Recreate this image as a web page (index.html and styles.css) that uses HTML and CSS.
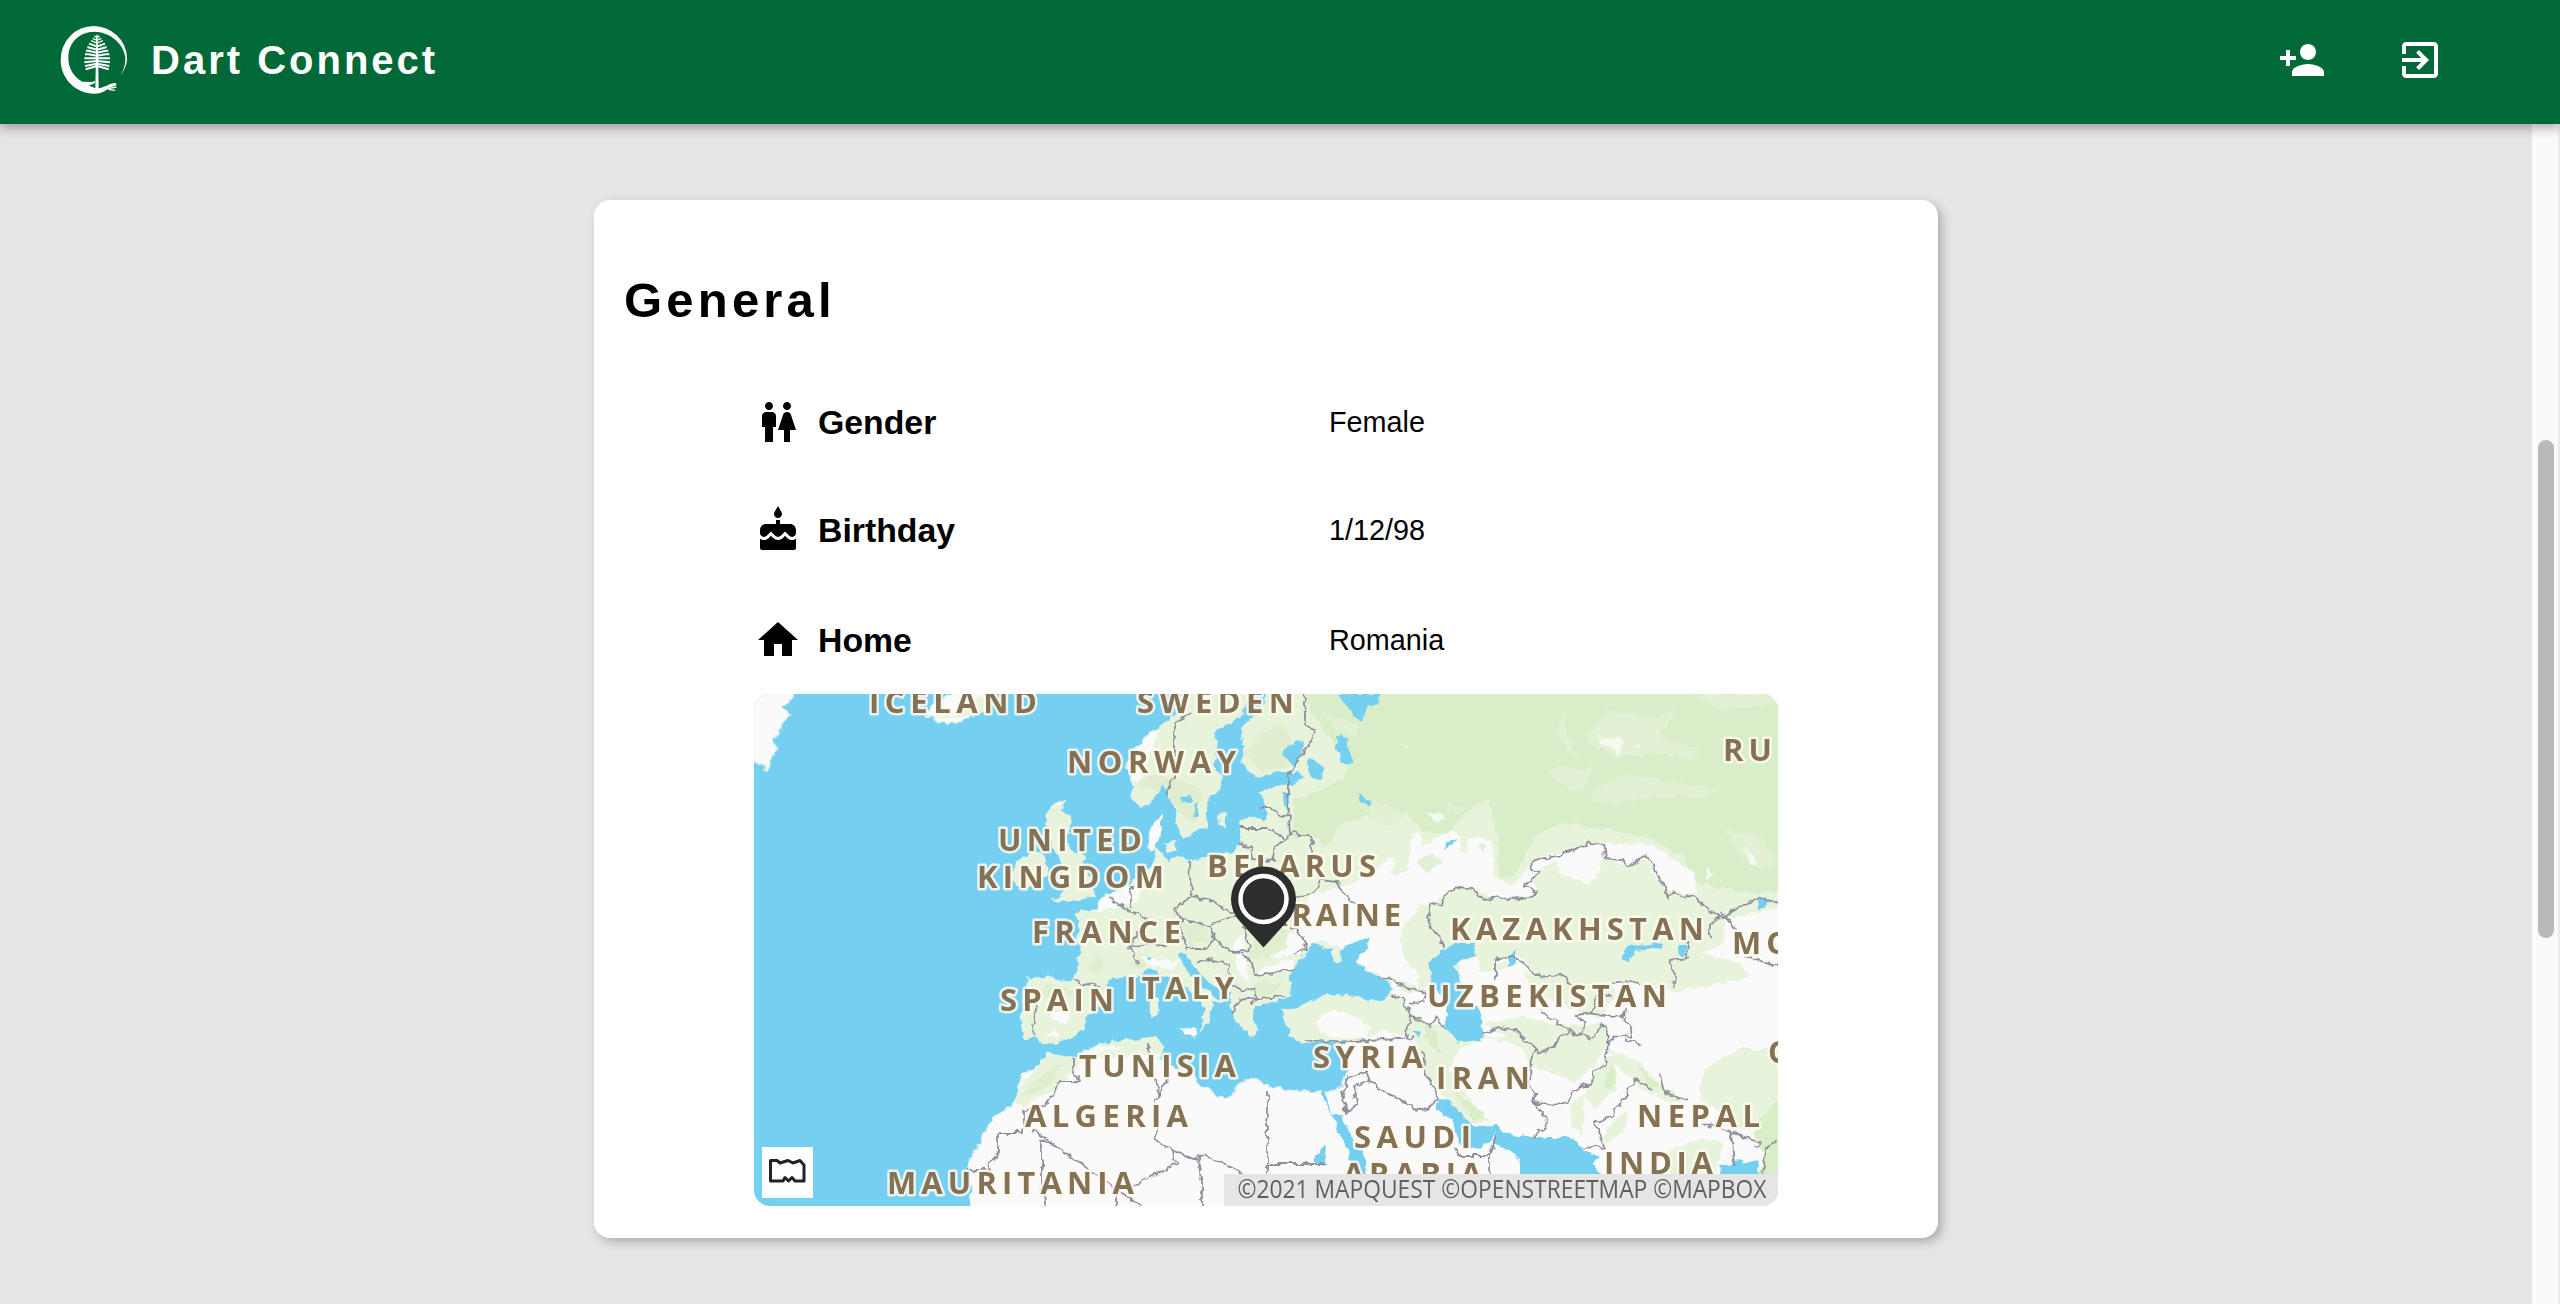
FILE: index.html
```html
<!DOCTYPE html>
<html lang="en">
<head>
<meta charset="utf-8">
<title>Dart Connect</title>
<link rel="stylesheet" href="styles.css">
</head>
<body>
<header class="topbar">
  <div class="brand">
    <svg class="logo" viewBox="0 0 240 240" aria-hidden="true">
      <path fill="#fff" d="M195 169C211 146 217 130 216 112A101 98 0 0 0 116 18A99 101 0 0 0 17 120C17 176 62 221 118 221C142 221 152 212 162 204L185 195L182 189C162 190 150 202 132 205L122 205L102 197L120 189L120 182L112 186L82 185C56 170 40 146 40 113C40 66 74 36 117 35C166 35 206 72 211 112C212 134 206 150 195 169Z"/>
      <path fill="none" stroke="#fff" stroke-width="4" d="M160 206L184 201M160 208L180 211"/>
      <path fill="#fff" d="M124 44H128L131 206H121Z"/>
      <g fill="none" stroke="#fff" stroke-width="6">
        <path stroke-width="4" d="M118 48L126 53L134 48M113 55L126 61L139 55M108 62L126 69L144 62"/>
        <path d="M102 71L126 79L150 71M97 81L126 89L155 81M93 92H100L126 98L152 92H160M90 103H100L126 107L152 103H163M88 115L126 115L165 115M88 127L126 123L165 127M90 138L126 131L163 138M92 148L126 138L161 148"/>
      </g>
    </svg>
    <span class="brand-name">Dart Connect</span>
  </div>
  <nav class="actions">
    <svg class="icon" viewBox="0 0 24 24"><path d="M15 12c2.21 0 4-1.79 4-4s-1.79-4-4-4-4 1.79-4 4 1.79 4 4 4zm-9-2V7H4v3H1v2h3v3h2v-3h3v-2H6zm9 4c-2.67 0-8 1.34-8 4v2h16v-2c0-2.66-5.33-4-8-4z"/></svg>
    <svg class="icon" viewBox="0 0 24 24"><path d="M10.09 15.59L11.5 17l5-5-5-5-1.41 1.41L12.67 11H3v2h9.67l-2.58 2.59zM19 3H5c-1.11 0-2 .9-2 2v4h2V5h14v14H5v-4H3v4c0 1.1.89 2 2 2h14c1.1 0 2-.9 2-2V5c0-1.1-.9-2-2-2z"/></svg>
  </nav>
</header>
<div class="body">
  <main class="content">
    <section class="card">
      <h1 class="card-title">General</h1>
      <div class="details">
        <div class="row">
          <div class="field"><svg class="icon" viewBox="0 0 24 24"><path d="M5.5 22v-7.5H4V9c0-1.1.9-2 2-2h3c1.1 0 2 .9 2 2v5.5H9.5V22h-4zM18 22v-6h3l-2.54-7.63C18.18 7.55 17.42 7 16.56 7h-.12c-.86 0-1.63.55-1.9 1.37L12 16h3v6h3zM7.5 6c1.11 0 2-.89 2-2s-.89-2-2-2-2 .89-2 2 .89 2 2 2zm9 0c1.11 0 2-.89 2-2s-.89-2-2-2-2 .89-2 2 .89 2 2 2z"/></svg><span>Gender</span></div>
          <div class="value">Female</div>
        </div>
        <div class="row row-birthday">
          <div class="field"><svg class="icon" viewBox="0 0 24 24"><path d="M12 6c1.11 0 2-.9 2-2 0-.38-.1-.73-.29-1.03L12 0l-1.71 2.97c-.19.3-.29.65-.29 1.03 0 1.1.9 2 2 2zm4.6 9.99l-1.07-1.07-1.08 1.07c-1.3 1.3-3.58 1.31-4.89 0l-1.07-1.07-1.09 1.07C6.75 16.64 5.88 17 4.96 17c-.73 0-1.4-.23-1.96-.61V21c0 .55.45 1 1 1h16c.55 0 1-.45 1-1v-4.61c-.56.38-1.23.61-1.96.61-.92 0-1.79-.36-2.44-1.01zM18 9h-5V7h-2v2H6c-1.66 0-3 1.34-3 3v1.54c0 1.08.88 1.96 1.96 1.96.52 0 1.02-.2 1.38-.57l2.14-2.13 2.13 2.13c.74.74 2.03.74 2.77 0l2.14-2.13 2.13 2.13c.37.37.86.57 1.38.57 1.08 0 1.96-.88 1.96-1.96V12C21 10.34 19.66 9 18 9z"/></svg><span>Birthday</span></div>
          <div class="value">1/12/98</div>
        </div>
        <div class="row row-home">
          <div class="field"><svg class="icon" viewBox="0 0 24 24"><path d="M10 20v-6h4v6h5v-8h3L12 3 2 12h3v8z"/></svg><span>Home</span></div>
          <div class="value">Romania</div>
        </div>
        <svg class="map" viewBox="0 0 1024 512" role="img" aria-label="Map of Romania">
          <defs>
            <filter id="rough" filterUnits="userSpaceOnUse" x="-20" y="-20" width="1064" height="552">
              <feTurbulence type="fractalNoise" baseFrequency=".12" numOctaves="2" seed="4" result="n"/>
              <feDisplacementMap in="SourceGraphic" in2="n" scale="8" xChannelSelector="R" yChannelSelector="G"/>
              <feGaussianBlur stdDeviation=".6"/>
            </filter>
            <clipPath id="mainland">
              <path id="land" d="M-10-10H43L38 6 29 13 36 21 28 29 26 39 19 46 23 56 16 66 14 76 0 68H-10Z
                M172 22L180 10 205-5 240 0 236 14 214 24 206 30 192 30Z
                M294 122L300 110 310 107 306 117 317 123 315 134 311 144 316 157 330 163 328 172 338 190 340 202 320 206 300 206 313 195 306 186 312 176 306 166 298 150 292 140Z
                M263 168L280 158 291 162 292 182 270 196 258 186Z
                M429-10L426 21 414 26 401 36 389 46 378 59 373 73 381 93 376 103 388 113 401 103 409 89 416 103 421 116 423 129 429 144 439 139 451 134 453 106 466 93 468 84 460 76 463 49 459 39 473 29 489 19 498-10Z
                M514-10L511 10 503 19 489 33 491 53 489 71 506 83 526 76 545 78 552 84 543 90 526 92 506 98 513 113 513 126 503 126 494 121 488 131 489 139 486 149 479 159 456 163 436 168 429 163 413 168 406 159 394 153 396 136 408 121 406 139 402 150 401 173 384 183 373 193 346 204 343 216 321 219 326 229 323 243 329 259 324 263 324 279 318 289 296 284 274 284 269 299 271 313 266 326 271 343 283 344 293 351 316 344 329 334 331 323 346 312 353 306 352 290 359 283 383 283 396 273 409 281 429 289 443 303 453 313 449 324 446 336 453 329 456 318 458 306 469 309 443 289 426 269 423 259 433 259 444 276 456 289 479 299 478 313 481 326 489 333 498 343 503 336 498 326 499 313 523 306 536 301 536 293 534 283 543 269 548 263 556 249 566 248 568 256 579 254 578 266 584 269 589 264 584 256 596 249 616 243 613 256 603 266 613 276 633 286 638 296 629 308 613 306 593 301 573 301 556 309 543 314 526 316 533 329 536 343 551 349 566 346 583 348 588 363 593 376 588 393 569 398 546 398 516 393 496 384 481 393 479 403 469 403 446 393 439 379 416 373 406 366 409 353 403 344 366 348 356 348 336 354 323 364 293 359 286 371 268 381 263 399 259 413 239 423 226 449 214 469 218 489 214 530H1050V-10Z
                M396 306L403 304 404 320 397 322ZM425 335L442 335 441 344ZM410 150L420 148 422 156 414 158ZM466 120L470 120 470 132 466 130Z"/>
            </clipPath>
          </defs>
          <rect width="1024" height="512" fill="#75cff0"/>
          <g filter="url(#rough)">
            <use href="#land" fill="#fafafa" stroke="#dff1ee" stroke-width="1.5"/>
            <g clip-path="url(#mainland)">
              <!-- low vegetation -->
              <path fill="#e8f3dc" d="M172 22H200L236-5 240 20 190 24ZM250 130L340 100 392 70 410 20 430-10H1034V212L969 226 973 249 946 259 986 269 996 283 919 299 873 286 816 286 786 283 766 263 739 266 739 279 706 276 659 300 630 286 606 266 540 308 500 352H260Z"/>
              <path fill="#e8f3dc" d="M286 371L293 359 323 364 420 340 412 360 330 366 306 392 270 412 255 405Z"/>
              <path fill="#e8f3dc" d="M520 310L580 298 640 300 672 330 700 330 740 345 760 340 800 330 830 330 840 345 800 350 782 360 760 350 730 345 705 355 696 375 720 410 735 428 715 428 694 408 670 375 660 345 630 335 600 350H530Z"/>
              <path fill="#e8f3dc" d="M770 355L800 345 815 335 850 330 853 350 838 375 820 388 795 378 775 372ZM830 400L845 370 860 360 862 395 840 415ZM818 410L830 400 828 440 816 432ZM846 450L860 425 875 415 870 435 856 448ZM910 460L940 445 970 448 962 480 915 480ZM945 400L950 375 985 355 1030 355V430L990 436 946 404Z"/>
              <path fill="#e8f3dc" d="M855 355L885 368 900 385 930 408 915 408 890 396 862 372ZM730 330L770 322 820 340 800 350 770 350ZM770 280H850L862 300 846 325 820 315 780 300ZM740 268H765L745 276Z"/>
              <path fill="#d9edc9" d="M1030 400L1005 425 1000 440 1010 460 1000 512H1030ZM700 398L722 412 734 426 718 424ZM850 395L858 370 862 390ZM668 325L682 340 686 360 676 352ZM885 372L910 398 898 394Z"/>
              <!-- forest -->
              <g transform="translate(506 -4) scale(.33333)">
                <path fill="#d9edc9" d="M130 0H1570V600L1470 610 1310 580 1270 500 1180 450 1060 420 900 400 820 440 760 560 720 560 710 440 690 330 640 350 560 430 480 420 440 370 350 370 240 400 200 470 160 440 100 440 100 330 250 270 270 220 200 130 150 60Z"/>
                <path fill="#e2f0d3" d="M870 250L900 220 960 240 1000 230 970 300 930 300ZM980 130L1040 60 1180 80 1250 60 1200 140 1320 180 1300 210 1180 190 1080 200 1000 170ZM900 90L920 60 915 120 960 210 935 200 890 130ZM1000 300L1100 250 1200 270 1380 300 1330 320 1200 320 1060 340 990 340ZM180 60L240 80 290 110 290 140 230 120ZM420 155L450 165 440 175ZM560 340L620 350 600 375 560 370ZM1290 12L1560 12 1560 40 1380 60ZM1400 420L1500 440 1560 520 1500 540 1440 500ZM330 330L440 370 400 410 330 390Z"/>
                <path fill="#f5f9f0" d="M1010 130L1040 150 1080 140 1095 160 1075 195 1055 170 1030 175ZM1120 165L1145 165 1130 180ZM500 375L550 370 555 390 530 395ZM1455 470L1500 520 1480 530 1455 500ZM1340 530L1360 550 1345 570Z"/>
                <path fill="#fafafa" d="M60 760L130 690 150 610 230 600 350 540 380 510 405 505 390 560 450 545 450 440 480 430 490 470 540 440 570 415 600 440 600 490 625 490 625 440 690 450 700 480 700 560 760 590 820 510 980 460 1180 465 1240 510 1300 540 1310 610 1220 605 1150 500 1100 530 1030 500 1010 560 980 580 900 550 890 510 820 550 830 610 780 630 690 620 590 590 520 640 480 650 430 710 420 780 480 860 470 890 300 830 250 780 180 750 110 780 60 810 20 800Z"/>
                <path fill="#e2f0d3" d="M470 510L520 490 545 520 500 550ZM650 465L680 465 670 495Z"/>
              </g>
              <path fill="#dcedcb" opacity=".8" d="M500 245L530 230 536 250 520 262 496 266ZM428 232L450 228 456 246 436 252ZM380 90L400 80 440 90 450 100 440 130 426 120 415 100ZM266 400L290 380 310 368 300 385 280 400ZM370 270L390 262 400 268 385 275ZM340 262L352 268 345 280 334 276ZM500 290L530 288 520 300 502 302ZM490 60L506 40 530 30 545 70 510 78ZM276 296L300 290 330 300 300 304Z"/>
              <path fill="#fafafa" d="M378 59L392 46 400 52 388 76 383 90 376 75ZM394 130L408 121 404 155 394 153ZM346 204L384 190 386 206 360 214 340 218ZM480 250L492 236 490 250 496 290 484 280ZM386 262L420 268 428 262 418 276 392 270ZM560 328L580 316 600 322 618 334 610 344 580 344 566 338ZM296 318L316 318 312 330 298 326ZM425 335L442 335 441 344ZM290 340L302 336 306 344ZM505 276L540 264 538 276 505 280ZM535 240L550 235 548 262 530 262ZM706 268L722 262 726 276 704 278Z"/>
            </g>
            <!-- inland water -->
            <g fill="#75cff0">
              <path d="M566 396L571 398 577 420 588 420 589 428 595 436 600 452 609 456 613 470 616 515H606L602 482 589 446 580 428Z"/>
              <path d="M684 405L697 406 706 420 716 430 730 433 744 429 750 439 770 443 816 443 830 456 846 463 838 468 846 480V515H762L766 466 756 456 744 451 738 449 742 438 732 450 720 456 706 450 698 425 682 416Z"/>
              <path d="M966 482L967 471 980 469 986 463 992 469 1003 466 1008 490H966Z"/>
              <path d="M690 254L704 249 723 249 721 262 706 266 700 273 707 281 708 293 713 310 727 316 728 346 706 348 690 335 694 312 680 290 674 270Z"/>
              <path d="M583 0H625L626 10 614 12 608 27 600 22 590 10ZM583 42L593 44 596 62 600 70 592 72 583 56ZM532 52L550 46 548 60 540 72 530 62ZM552 62L572 74 566 86 556 84ZM604 98L617 108 616 112 606 108ZM528 98L536 100 536 118 530 112ZM506 106L511 112 510 128 504 124ZM687 155L694 148 704 146 692 154ZM1004 206L1014 204 1012 214 1006 214ZM868 268L872 254 900 249 910 250 906 255 880 257 874 268ZM926 252L933 252 930 262 924 258ZM754 262L764 256 760 270 755 272ZM660 336L667 338 664 344ZM586 345L592 345 590 350ZM560 464L572 452 570 472 560 470ZM426 102L436 100 438 108 428 110ZM442 110L446 108 444 122 440 122ZM396 268L398 262 394 262Z"/>
            </g>
            <!-- borders -->
            <g fill="none" stroke="#90909c" stroke-width="1.8" stroke-linejoin="round">
              <path d="M436 18L421 30 421 66 421 82 416 90 412 102M549 0L552 18 552 30 562 40 550 58 534 80 534 110 536 140M506 113H518L526 120 536 122M488 134H512L524 140 530 146M530 146L540 138 558 144 558 165M484 150L496 152 498 165 520 166 522 152 530 146M436 168L438 200M354 204L374 216 392 224M377 192V214M421 214L438 202 456 206 470 216 486 220 468 226 456 232 440 228 428 226 421 214M428 226V240L432 256M456 232L460 246 450 254 432 254M460 246L480 258 496 256 490 232M392 224L384 240 376 254 384 270M376 254L396 250 410 252M444 268L460 266 474 270 478 290 488 296M474 256L490 262 498 270 502 282 540 276M488 296L500 294 504 305M478 320L486 306 500 304M320 286L330 290 346 292M280 306L282 318 278 332 280 342M494 310L506 304 530 302M536 205L556 200 568 186 582 188 590 200 600 210M536 232L548 242 552 254 540 262"/>
              <path d="M320 364V374L326 388H306L300 402 288 412 270 416 270 439H244V460L236 472 236 478M280 436L400 522M286 447H298M288 447V490L292 515M394 348V364L404 396 404 404 408 392 416 386M402 404V448L420 456 422 470 380 492M420 456L440 466 450 460 490 480M444 464L448 490 448 515M364 500V515M214 476H236M513 396V480M513 470H572M352 488L364 496M588 396L592 420 602 410 600 392 616 388 612 376 594 384 590 400M616 388L632 398 660 414 674 416 684 404 672 380 668 356M550 346L600 348 660 344M624 282L646 290 668 298 672 306 656 310M638 300L650 306 656 322 668 324M656 322L652 344M656 322L676 332 684 322 690 335M700 455L708 462H736M736 515V464L742 440"/>
              <g transform="translate(506 -4) scale(.33333)" stroke-width="5.4"><path d="M550 770L540 740 500 700 515 640 545 650 550 620 590 592 640 600 670 630 720 620 780 630 830 610 790 585 815 570 835 545 815 540 815 512 900 497 985 458 1030 465 1035 505 1085 510 1100 530 1155 495 1190 545 1225 620 1240 605 1260 620 1300 618 1350 662 1385 680 1490 625 1560 640M1385 680L1350 705 1350 745M1385 665L1430 720"/></g>
              <g transform="translate(686 166) scale(.33333)" stroke-width="5.4"><path d="M745 240L740 295 690 300 705 345 695 385M165 360V300L215 285 300 350 370 345 400 380M300 450L400 520 425 525 430 490 410 465 450 460 470 410 510 400M450 460L540 470 560 450M550 470L575 490 578 530 520 530 505 550M120 525L180 500 230 515 280 560 300 580 340 560 370 520H400M400 525L460 530 490 495 505 520 500 610 460 640 455 670 400 690 385 725 340 738 275 725 290 700 270 685 272 600 285 570M275 725L320 770 320 800 290 815 288 835M430 860H490L465 790 515 770 590 655M520 370L560 360 600 370M590 655L640 690M660 640L670 690 710 715 750 715M790 790L860 810 910 830 965 845 940 860M865 810L880 850 885 920M970 940L975 870 1014 840M920 290L1014 320M555 540L600 550"/></g>
            </g>
          </g>
          <g class="map-labels">
            <text x="115" y="18.500" textLength="168">ICELAND</text>
            <text x="383" y="18.500" textLength="157">SWEDEN</text>
            <text x="313" y="78.500" textLength="169">NORWAY</text>
            <text x="244" y="156.500" textLength="144">UNITED</text>
            <text x="223" y="193.500" textLength="187">KINGDOM</text>
            <text x="453" y="182.500" textLength="169">BELARUS</text>
            <text x="486" y="231.500" textLength="161">UKRAINE</text>
            <text x="278" y="248.500" textLength="149">FRANCE</text>
            <text x="246" y="316.500" textLength="114">SPAIN</text>
            <text x="372" y="304.500" textLength="108">ITALY</text>
            <text x="325" y="382.500" textLength="157">TUNISIA</text>
            <text x="271" y="432.500" textLength="163">ALGERIA</text>
            <text x="133" y="499.500" textLength="247">MAURITANIA</text>
            <text x="559" y="373.500" textLength="110">SYRIA</text>
            <text x="682" y="394.500" textLength="94">IRAN</text>
            <text x="600" y="453.500" textLength="117">SAUDI</text>
            <text x="589" y="490.500" textLength="139">ARABIA</text>
            <text x="696" y="245.500" textLength="254">KAZAKHSTAN</text>
            <text x="673" y="312.500" textLength="240">UZBEKISTAN</text>
            <text x="978" y="259.500" letter-spacing="5">MO</text>
            <text x="969" y="66.500" letter-spacing="5">RU</text>
            <text x="1014" y="368.500">C</text>
            <text x="883" y="432.500" textLength="123">NEPAL</text>
            <text x="850" y="479.500" textLength="109">INDIA</text>
          </g>
          <g class="pin">
            <path fill="#2d2d2d" d="M509.500 253.500L486 227.500A32.500 32.500 0 1 1 533 227.500Z"/>
            <circle cx="509.500" cy="205" r="23" fill="none" stroke="#fff" stroke-width="4.500"/>
          </g>
          <rect x="8" y="453" width="51" height="51" rx="1" fill="#fff"/>
          <path fill="none" stroke="#222" stroke-width="3" stroke-linejoin="round" d="M16.500 466.500H23L26 469 34 466.500 39 469 46 466.500 50 471V487H41L38 483.500 34.500 487 31 483.500 29 487H16.500Z"/>
          <rect x="470" y="480" width="554" height="32" fill="#e5e5e5"/>
          <text class="map-credit" x="483.500" y="503.500" textLength="529" lengthAdjust="spacingAndGlyphs">©2021 MAPQUEST ©OPENSTREETMAP ©MAPBOX</text>
        </svg>
      </div>
    </section>
  </main>
  <div class="scrollbar"><div class="thumb"></div></div>
</div>
</body>
</html>
```
FILE: styles.css
```css
* { box-sizing: border-box; }

body {
  margin: 0;
  height: 1304px;
  overflow: hidden;
  display: flex;
  flex-direction: column;
  background: #e6e5e3;
  color: #000;
  font-family: "Liberation Sans", Arial, Helvetica, sans-serif;
}

.topbar {
  position: relative;
  z-index: 1;
  flex: none;
  height: 124px;
  padding: 0 116px 4px 55px;
  display: flex;
  align-items: center;
  justify-content: space-between;
  background: #006937;
  color: #fff;
  box-shadow: 0 4px 10px rgba(50, 35, 45, .38);
}

.brand { display: flex; align-items: center; gap: 16px; }
.logo { width: 80px; height: 80px; }
.brand-name { padding-top: 1px; font-size: 40px; font-weight: 700; letter-spacing: 3px; }

.actions { display: flex; gap: 70px; }

.icon { display: block; flex: none; width: 48px; height: 48px; fill: currentColor; }

.body { flex: 1; min-height: 0; display: flex; }

.content {
  flex: 1;
  display: flex;
  justify-content: center;
  align-items: flex-start;
  padding-top: 76px;
}

.card {
  width: 1344px;
  height: 1038px;
  padding: 72px 30px 32px;
  border-radius: 16px;
  background: #fff;
  box-shadow: 4px 4px 10px rgba(50, 45, 45, .3);
}

.card-title {
  margin: 0 0 70px;
  font-size: 49px;
  line-height: 56px;
  letter-spacing: 4.2px;
}

.details { width: 1024px; margin: 0 auto; }

.row {
  display: grid;
  grid-template-columns: 575px 1fr;
  align-items: center;
  height: 48px;
  margin-bottom: 60px;
}
.row-birthday { margin-bottom: 62px; }
.row-home { margin-bottom: 30px; }

.field { display: flex; align-items: center; gap: 16px; font-size: 33.8px; font-weight: 700; }
.value { font-size: 28.8px; }

.map { display: block; width: 1024px; height: 512px; border-radius: 16px; }

.map-labels {
  font: 700 31px "Open Sans", sans-serif;
  fill: #857154;
  stroke: rgba(255, 250, 240, .85);
  stroke-width: 5px;
  stroke-linejoin: round;
  paint-order: stroke;
  filter: blur(.6px);
}

.pin { filter: blur(.5px); }

.map-credit { font: 400 25px "Open Sans", sans-serif; fill: #5f5f5f; filter: blur(.5px); }

.scrollbar {
  width: 28px;
  padding: 316px 4px 0 6px;
  background: #fafafa;
  border-right: 2px solid #ebebeb;
}
.thumb { width: 16px; height: 498px; border-radius: 8px; background: #b9b9b9; }
```
